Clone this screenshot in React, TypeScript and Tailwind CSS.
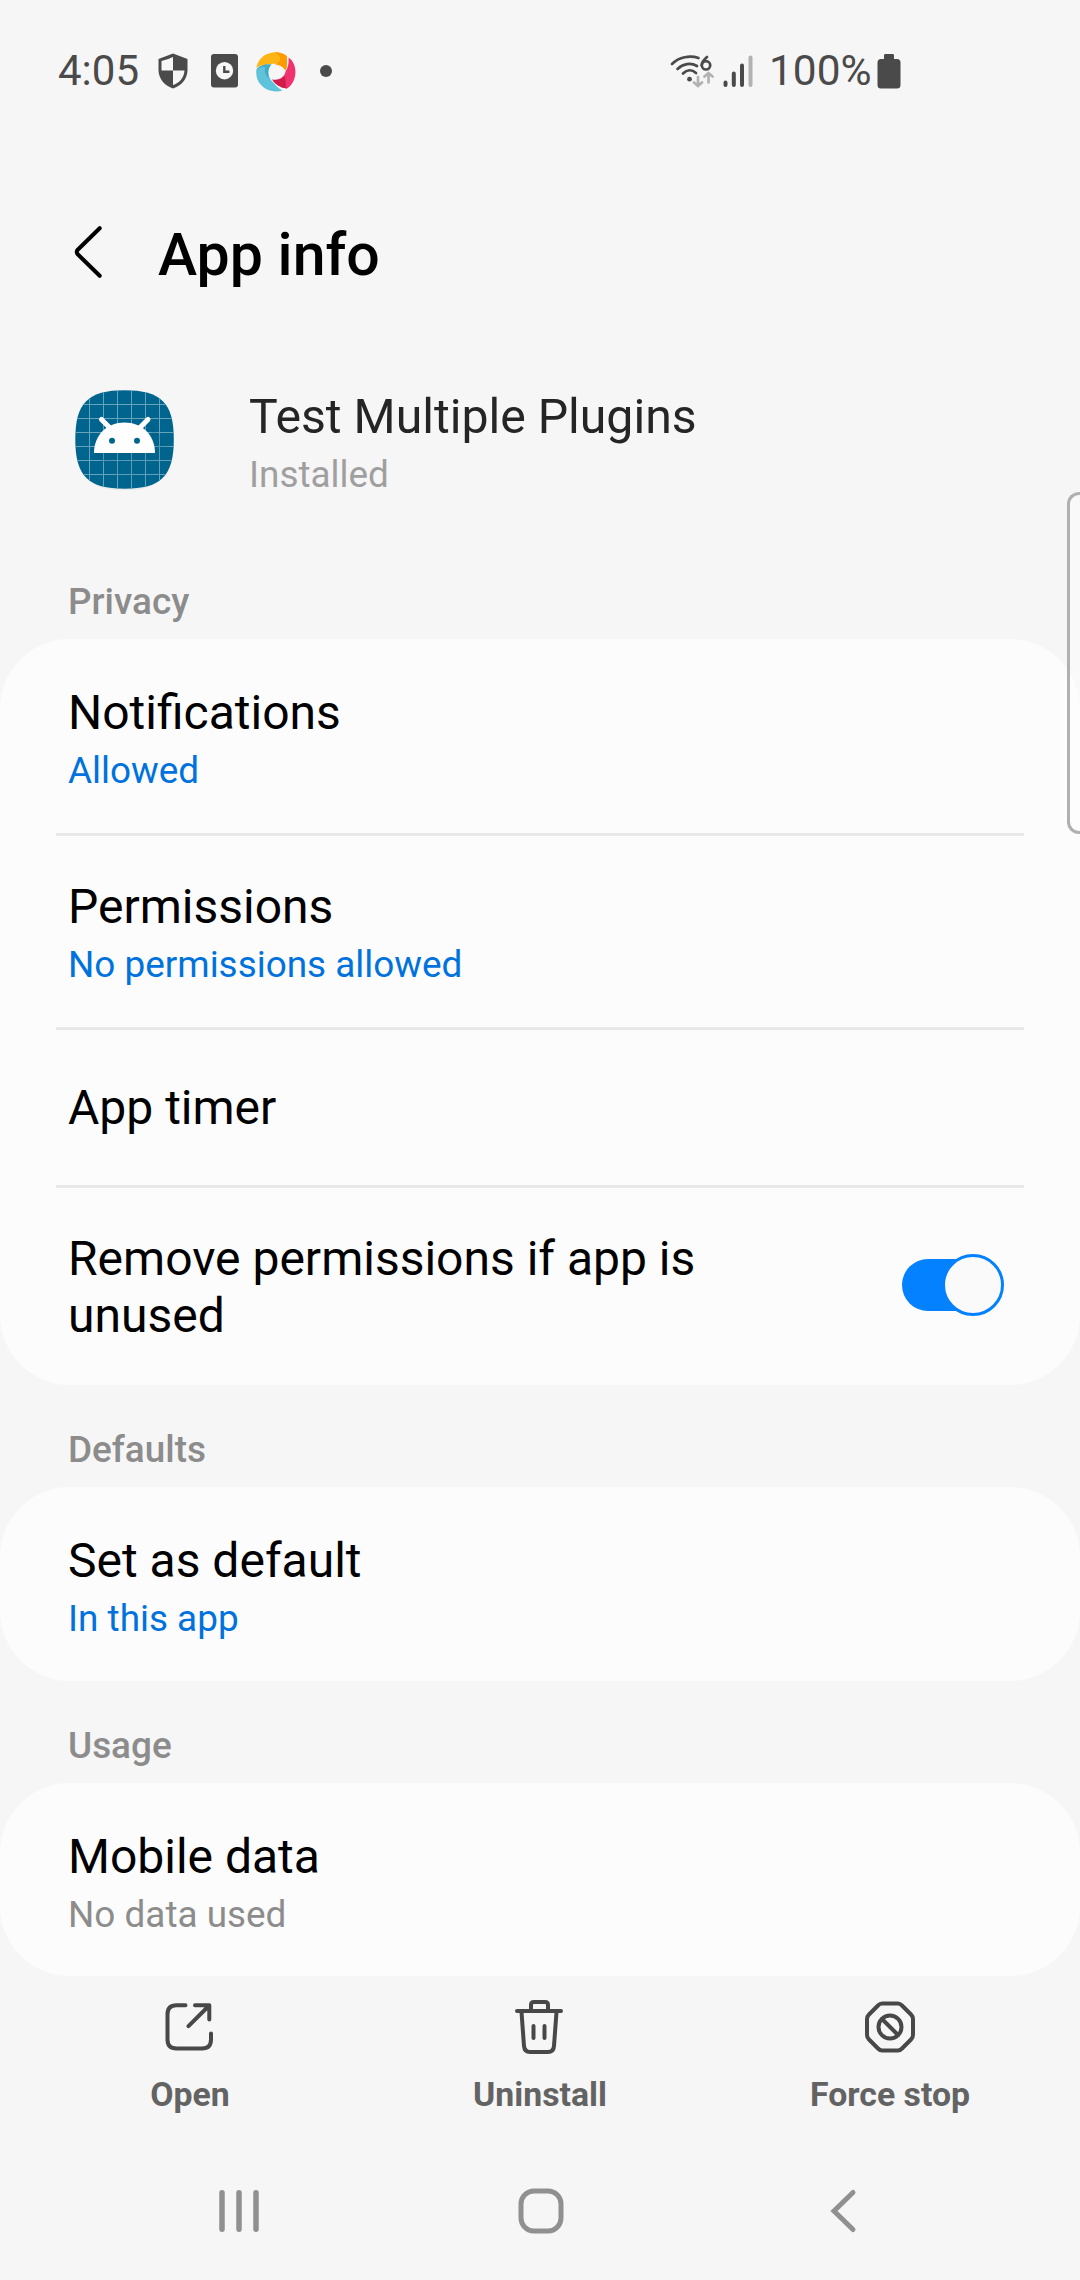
import React from "react";

function StatusBar() {
  return (
    <header className="flex h-[140px] items-center text-[#4a4a4a]">
      <div className="ml-[58px] mt-[2px] w-[100px] text-[42px] leading-[50px]">4:05</div>
      <svg className="mt-[2px] h-9 w-[30px]" viewBox="0 0 30 36">
        <path fill="currentColor" d="M15 .5 29.5 6V17C29.5 26 23 33 15 35.5 7 33 .5 26 .5 17V6Z" />
        <path fill="#f6f6f6" d="M15 4V17.6H3.5V8Q10 6.5 15 4ZM15 17.6H26.5C26 25 21 30.5 15 32Z" />
      </svg>
      <svg className="ml-[23px] mt-[2px] h-[34px] w-[27px]" viewBox="0 0 27 34">
        <rect width="27" height="33.5" rx="3" fill="currentColor" />
        <circle cx="13.5" cy="16.7" r="8.7" fill="#f6f6f6" />
        <path d="M13.3 12V17.7H18.4" fill="none" stroke="currentColor" strokeWidth="2.4" />
      </svg>
      <svg className="ml-[18px] mt-[3px] h-10 w-10" viewBox="0 0 40 40">
        <path fill="#fdb515" d="M.5 15C3 5 11 .3 20 .3 25 .3 29 2 31 4.500V14L29.500 18.500C25 11 17 11 11 13 6 12.500 2 14 .5 16Z" />
        <path fill="#ff9a00" d="M18 .4C24 .2 29 2 31 4.500V14L29.500 18.500C27 14.500 23 12.500 19 12.500 27 9 25 3 18 .4Z" />
        <path fill="#f0326e" d="M32.500 5.500C38 9 40.500 17 39 24 38 30 34 35 31 36.500 24 36 18 31 16.200 27.500 24 29 29 24 29.500 19.500 32 16 33 11 32.500 5.500Z" />
        <path fill="#d01c4b" d="M16.200 27.500C21 29 26 27 29 24 30 29 29 33 31 36.500 24 36 18 31 16.200 27.500Z" />
        <path fill="#5fc3db" d="M.3 18C2 14 8 12 15.500 12.500 10 18 12 27 18 31 20 34 23 37 26.500 38.500 20 40.500 11 39.500 5 33 1 29-.2 23 .3 18Z" />
        <path fill="#45aac4" d="M.3 18C2 14 8 12 15.500 12.500 11 17 12 24 14 27 10 25 8 20 9 15 5 15 2 16 .3 18Z" />
      </svg>
      <div className="ml-6 mt-[2px] size-3 rounded-full bg-[#4a4a4a]" />
      <svg className="ml-[338px] mt-[2px] h-9 w-11" viewBox="0 0 44 36" fill="none" strokeLinecap="round">
        <g stroke="#4a4a4a" strokeWidth="2.7">
          <path d="M2 11C9 4 20 2 28.500 5M7.500 16C13 10.500 21 9.500 27 13M13 20.500C17 16.500 22 16.500 26 20" />
          <path d="M37 4C34 6.500 31.700 9 31.700 12.300" />
          <circle cx="36" cy="12.300" r="4.200" />
        </g>
        <circle cx="19.500" cy="26.200" r="2.400" fill="#4a4a4a" />
        <path stroke="#b2b2b2" strokeWidth="2.700" d="M28 24V32M24 29.500 28 33 32 29.500M38.500 29.500V21M34.500 23.500 38.500 20 42.500 23.500" />
      </svg>
      <svg className="ml-[9px] mt-[2px] h-8 w-[30px]" viewBox="0 0 30 32" stroke="#4a4a4a" strokeWidth="4" strokeLinecap="round">
        <path d="M2.500 27.500V30M10.800 18.500V30M19 10.500V30" />
        <path stroke="#b2b2b2" d="M27.500 2.500V30" />
      </svg>
      <div className="ml-[16px] mt-[2px] w-[108px] text-[42.4px] leading-[50px]">100%</div>
      <svg className="mt-[2px] h-[35px] w-6" viewBox="0 0 24 35">
        <path fill="currentColor" d="M8 0H16Q17 0 17 1.500V5H20Q23.500 5 23.500 8.500V31Q23.500 34.500 20 34.500H4Q.5 34.500 .5 31V8.500Q.5 5 4 5H7V1.500Q7 0 8 0Z" />
      </svg>
    </header>
  );
}

function AppHeader() {
  return (
    <>
      <div className="flex h-[230px] items-start">
        <svg className="ml-[73px] mt-[85px] h-[54px] w-[30px]" viewBox="0 0 30 54" fill="none" stroke="#000" strokeWidth="4" strokeLinecap="round" strokeLinejoin="round">
          <path d="M26.700 3.200 4.500 25Q3 27 4.500 29L26.700 50.800" />
        </svg>
        <h1 className="ml-[55px] mt-20 text-[59px] font-medium leading-[70px] text-black">App info</h1>
      </div>
      <div className="flex h-[167px] items-start">
        <svg className="ml-[73px] mt-[18px] h-[104px] w-[104px]" viewBox="0 0 104 104">
          <defs>
            <clipPath id="tile">
              <path d="M51.500 2.300C88 2.300 100.800 15 100.800 51.500S88 100.700 51.500 100.700 2.300 88 2.300 51.500 15 2.300 51.500 2.300Z" />
            </clipPath>
            <linearGradient id="shade" x1="0" y1="0" x2="0.500" y2="1">
              <stop offset="0" stopColor="#004b66" stopOpacity="0.700" />
              <stop offset="1" stopColor="#00658e" stopOpacity="0" />
            </linearGradient>
          </defs>
          <path d="M51.500 4C88 4 99 17 99 53S88 102.300 51.500 102.300 4 89 4 53 15 4 51.500 4Z" fill="#ececec" />
          <g clipPath="url(#tile)">
            <rect width="104" height="104" fill="#00658e" />
            <path d="M16.500 0V104M30.500 0V104M44.500 0V104M58.500 0V104M72.500 0V104M86.500 0V104M0 16.500H104M0 30.500H104M0 44.500H104M0 58.500H104M0 72.500H104M0 86.500H104" stroke="#66a3bb" strokeWidth="1" />
            <path d="M21 65 60 104H104V70L76 33 82 65Z" fill="url(#shade)" opacity=".5" />
          </g>
          <path d="M21 65C21 47 34 34.500 51.500 34.500S82 47 82 65Z" fill="#fff" />
          <path d="M28.500 31.500 37 40M75 31.500 66.500 40" stroke="#fff" strokeWidth="5" strokeLinecap="round" />
          <circle cx="39" cy="52.700" r="3" fill="#00658e" />
          <circle cx="64" cy="52.700" r="3" fill="#00658e" />
        </svg>
        <div className="ml-[72px] mt-[19px]">
          <div className="text-[48.2px] leading-[56px] text-[#252525]">Test Multiple Plugins</div>
          <div className="mt-2 text-[36.9px] leading-[44px] text-[#9f9f9f]">Installed</div>
        </div>
      </div>
    </>
  );
}

function SectionTitle({ children }: { children: React.ReactNode }) {
  return <h2 className="flex h-[102px] items-start pl-[68px] pt-[43px] text-[36.9px] font-medium leading-[44px] text-[#8c8c8c]">{children}</h2>;
}

function Card({ children }: { children: React.ReactNode }) {
  return <section className="rounded-[70px] bg-[#fcfcfc]">{children}</section>;
}

function Row({ title, detail, muted = false }: { title: string; detail: string; muted?: boolean }) {
  return (
    <div className="pl-[68px]">
      <div className="text-[48px] leading-[56px] text-black">{title}</div>
      <div className={muted ? "mt-2 text-[36.9px] leading-[44px] text-[#8c8c8c]" : "mt-2 text-[36.9px] leading-[44px] text-[#0072de]"}>{detail}</div>
    </div>
  );
}

function Divider() {
  return <div className="mx-14 h-[3px] bg-[#e8e8e8]" />;
}

function Action({ label, children }: { label: string; children: React.ReactNode }) {
  return (
    <div className="flex w-[350px] flex-col items-center">
      <svg className="mt-6 h-[56px] w-[56px]" viewBox="0 0 56 56" fill="none" stroke="#484848" strokeWidth="4" strokeLinecap="round" strokeLinejoin="round">
        {children}
      </svg>
      <div className="mt-[19px] text-[33.8px] font-bold leading-10 text-[#636363]">{label}</div>
    </div>
  );
}

export default function App() {
  return (
    <main className="relative h-[2280px] w-[1080px] overflow-hidden bg-[#f6f6f6] font-['Roboto',sans-serif]">
      <StatusBar />
      <AppHeader />
      <SectionTitle>Privacy</SectionTitle>
      <Card>
        <div className="h-[194px] pt-[46px]"><Row title="Notifications" detail="Allowed" /></div>
        <Divider />
        <div className="h-[191px] pt-[43px]"><Row title="Permissions" detail="No permissions allowed" /></div>
        <Divider />
        <div className="flex h-[155px] items-center pl-[68px] text-[48px] leading-[56px] text-black">App timer</div>
        <Divider />
        <div className="flex h-[197px] items-center justify-between pl-[68px] pr-[76px]">
          <div className="w-[680px] text-[48px] leading-[57px] text-black">Remove permissions if app is unused</div>
          <div className="mb-[3px] flex h-[62px] w-[102px] items-center">
            <div className="flex h-[52px] w-full items-center justify-end rounded-full bg-linear-to-r from-[#0381fe] from-70% to-transparent to-70%">
              <div className="size-[62px] shrink-0 rounded-full border-[3px] border-[#0381fe] bg-[#fafafa]" />
            </div>
          </div>
        </div>
      </Card>
      <SectionTitle>Defaults</SectionTitle>
      <Card>
        <div className="h-[194px] pt-[46px]"><Row title="Set as default" detail="In this app" /></div>
      </Card>
      <SectionTitle>Usage</SectionTitle>
      <Card>
        <div className="h-[193px] pt-[46px]"><Row title="Mobile data" detail="No data used" muted /></div>
      </Card>
      <div className="flex h-[174px] justify-center">
        <Action label="Open">
          <path d="M23.500 5.300H14.500Q5.500 5.300 5.500 14.300V39.500Q5.500 48.500 14.500 48.500H40Q49 48.500 49 39.500V33.500M33 5.300H47.300V19.500M46.700 6 26.500 26.200" />
        </Action>
        <Action label="Uninstall">
          <path d="M5 11H49M19 11V5Q19 2 22 2H33Q36 2 36 5V11M9.500 12 12 46Q12.500 52 18 52H36Q41.500 52 42 46L44.500 12M21.500 26V38M32.500 26V38" />
        </Action>
        <Action label="Force stop">
          <path d="M20 3.500H36Q38 3.500 40 5.500L49 14.500Q51 16.500 51 19V35Q51 37.500 49 39.500L40 48.500Q38 50.500 36 50.500H20Q18 50.500 16 48.500L7 39.500Q5 37.500 5 35V19Q5 16.500 7 14.500L16 5.500Q18 3.500 20 3.500ZM20 19 36 35" />
          <circle cx="28" cy="27" r="11.500" />
        </Action>
      </div>
      <nav className="flex h-[130px] items-start pt-[38px] text-[#909090]">
        <svg className="ml-[219px] h-[46px] w-10" viewBox="0 0 40 46" stroke="currentColor" strokeWidth="5.500" strokeLinecap="round">
          <path d="M3 4.800V41.200M20 4.800V41.200M37 4.800V41.200" />
        </svg>
        <svg className="ml-[259px] h-[46px] w-[46px]" viewBox="0 0 46 46" fill="none" stroke="currentColor" strokeWidth="5">
          <rect x="3" y="3" width="40" height="40" rx="13" />
        </svg>
        <svg className="ml-[266px] h-[46px] w-7" viewBox="0 0 28 46" fill="none" stroke="currentColor" strokeWidth="5" strokeLinecap="round">
          <path d="M23 4.500 4 23 23 41.500" />
        </svg>
      </nav>
      <aside className="absolute -right-[3px] top-[492px] h-[342px] w-[16px] rounded-l-[12px] border-[3px] border-r-0 border-[#b0b0b0] bg-white/40" />
    </main>
  );
}
